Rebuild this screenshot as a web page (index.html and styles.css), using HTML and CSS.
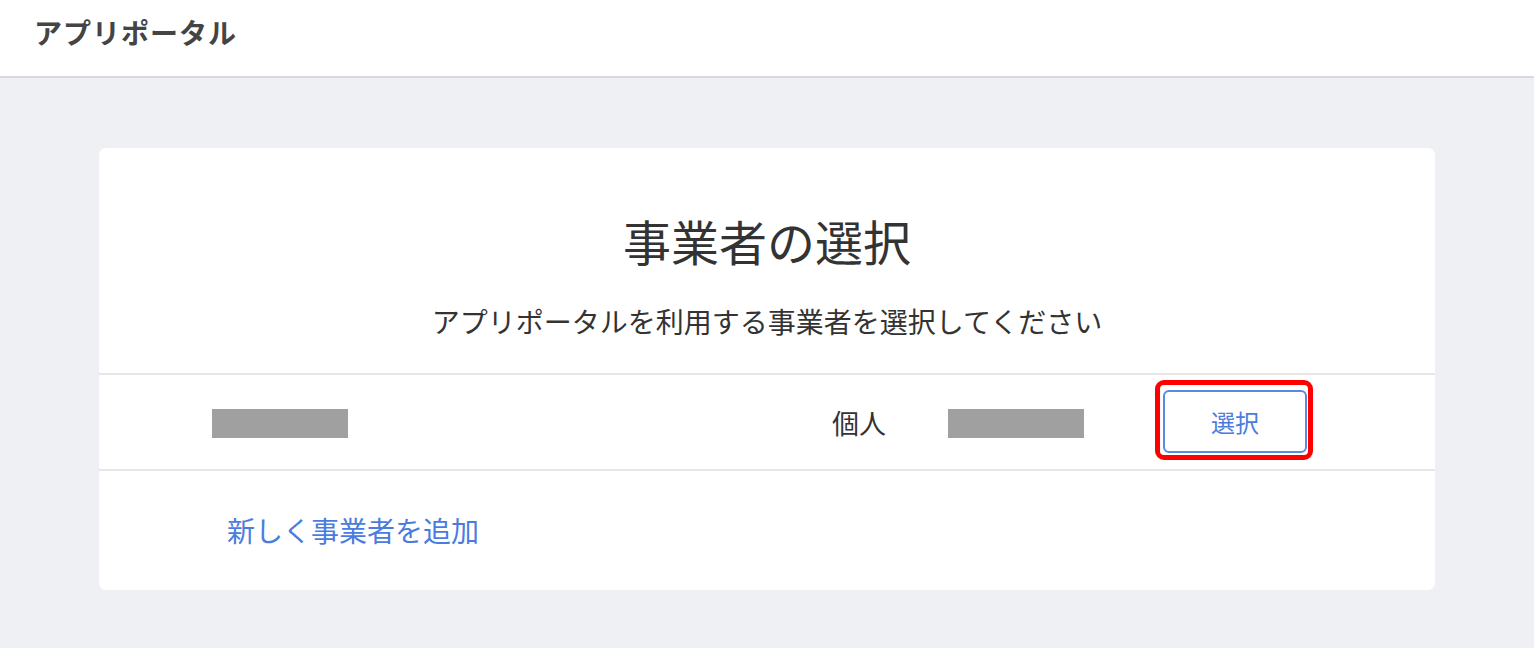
FILE: index.html
```html
<!DOCTYPE html>
<html lang="ja">
<head>
<meta charset="utf-8">
<title>アプリポータル</title>
<link rel="stylesheet" href="styles.css">
</head>
<body>
<header class="topbar">
  <h1 class="brand">アプリポータル</h1>
</header>
<main class="main">
  <section class="card">
    <h2 class="card-title">事業者の選択</h2>
    <p class="card-sub">アプリポータルを利用する事業者を選択してください</p>
    <div class="row">
      <div class="cell"><span class="mask"></span></div>
      <div class="cell type">個人</div>
      <div class="cell"><span class="mask"></span></div>
      <div class="cell">
        <div class="highlight">
          <button class="select-btn" type="button">選択</button>
        </div>
      </div>
    </div>
    <div class="add">
      <a class="add-link" href="#">新しく事業者を追加</a>
    </div>
  </section>
</main>
</body>
</html>
```

FILE: styles.css
```css
html, body {
  margin: 0;
  padding: 0;
}
body {
  background: #eff0f4;
  font-family: "Noto Sans CJK JP", "Noto Sans", sans-serif;
  color: #333;
  height: 648px;
  overflow: hidden;
}
.topbar {
  background: #fff;
  border-bottom: 2px solid #d9d9df;
  display: flex;
  align-items: center;
  padding-left: 34px;
  box-sizing: border-box;
  height: 78px;
}
.brand {
  margin: 0;
  font-size: 28px;
  font-weight: 700;
  color: #444;
  line-height: 1;
  letter-spacing: 1px;
  position: relative;
  top: -6px;
}
.main {
  padding: 70px 99px 0;
}
.card {
  background: #fff;
  border-radius: 7px;
  height: 442px;
  box-sizing: border-box;
  padding-top: 58px;
}
.card-title {
  margin: 0;
  text-align: center;
  font-size: 48px;
  font-weight: 400;
  line-height: 68px;
  color: #333;
}
.card-sub {
  margin: 27px 0 0;
  text-align: center;
  font-size: 28px;
  line-height: 40px;
  color: #333;
}
.row {
  margin-top: 32px;
  border-top: 2px solid #e6e6e6;
  border-bottom: 2px solid #e6e6e6;
  height: 98px;
  box-sizing: border-box;
  display: grid;
  grid-template-columns: 620px 116px 207px auto;
  align-items: center;
  padding-left: 113px;
}
.cell {
  display: flex;
  align-items: center;
}
.mask {
  display: block;
  width: 136px;
  height: 29px;
  background: #a0a0a0;
  position: relative;
  top: 1px;
}
.type {
  font-size: 27px;
  line-height: 40px;
  color: #333;
  position: relative;
  top: 1px;
}
.highlight {
  border: 5px solid #f00;
  border-radius: 9px;
  padding: 5px 1px 2px 3px;
  display: flex;
  margin-bottom: 4px;
}
.select-btn {
  width: 144px;
  height: 63px;
  border: 2px solid #5a88e2;
  border-radius: 6px;
  background: #fff;
  color: #4a7ce0;
  font-family: "Noto Sans CJK JP", "Noto Sans", sans-serif;
  font-size: 24px;
  padding: 0;
}
.add {
  padding: 39px 0 0 128px;
}
.add-link {
  font-size: 28px;
  line-height: 40px;
  color: #4a7ce0;
  text-decoration: none;
}
```
